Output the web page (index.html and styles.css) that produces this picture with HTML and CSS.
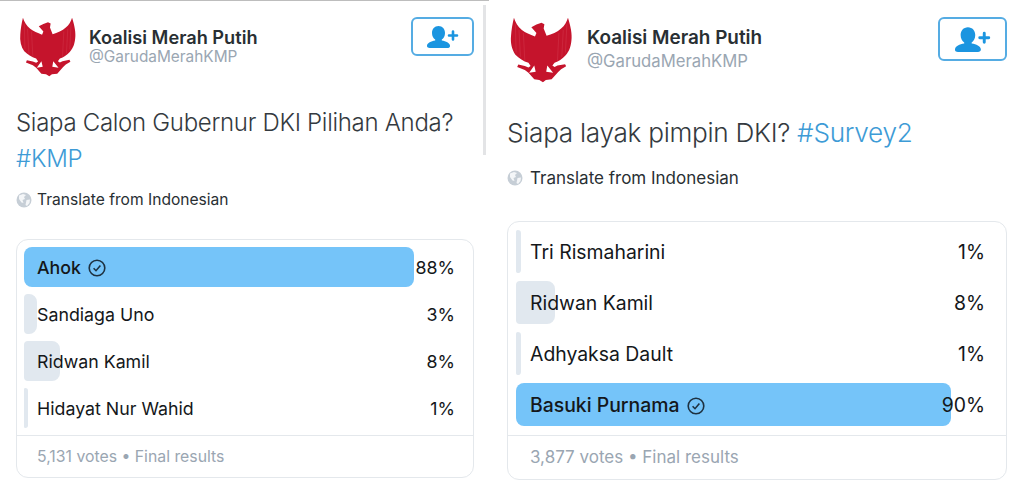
FILE: index.html
```html
<!DOCTYPE html>
<html lang="id">
<head>
<meta charset="utf-8">
<title>Koalisi Merah Putih polls</title>
<link rel="stylesheet" href="styles.css">
</head>
<body>
<svg class="defs" width="0" height="0" aria-hidden="true">
  <defs>
    <symbol id="garuda" viewBox="56 52 172 182">
      <path d="M66 54 C70 66 76 78 88 88 C98 96 110 100 124 106 L128 96 L114 80 L128 73 L142 68 L150 72 L148 84 L156 104 C170 100 186 94 196 84 C206 76 212 64 215 54 C220 70 226 92 225 110 C224 130 220 146 208 158 C198 168 190 174 178 178 L172 186 L178 190 L186 186 L207 182 L210 188 L196 196 L188 204 L170 224 L154 226 L146 232 L136 226 L122 224 L106 206 L96 198 L75 190 L78 183 L96 187 L106 191 L112 187 L106 178 C92 174 80 166 70 156 C60 142 56 124 58 104 C59 88 62 70 66 54 Z" fill="#c5142c"/>
      <path d="M122 186 L108 206 L126 203 Z M158 186 L174 206 L155 203 Z" fill="#fff"/>
      <path d="M70 72 L72 150 M80 88 L84 162 M92 96 L96 172 M212 72 L208 150 M202 88 L198 162 M190 96 L186 172" stroke="#d8475a" stroke-width="1" fill="none"/>
    </symbol>
    <symbol id="follow" viewBox="0 0 32 24">
      <path d="M11.5 1 C15.5 1 18 4.2 18 8 C18 11 16.6 13.4 14.8 14.6 L14.8 15.6 C19 16.4 22.6 17.8 23 20.6 C23.2 22.4 22 23 20.4 23 L2.6 23 C1 23 -.2 22.4 0 20.6 C.4 17.8 4 16.4 8.2 15.6 L8.2 14.6 C6.4 13.4 5 11 5 8 C5 4.2 7.5 1 11.5 1 Z" fill="#1b95e0"/>
      <path d="M26 6.5 V14.5 M22 10.5 H30" stroke="#1b95e0" stroke-width="2.6" stroke-linecap="round" fill="none"/>
    </symbol>
    <symbol id="globe" viewBox="0 0 16 16">
      <circle cx="8" cy="8" r="7.5" fill="#c6ced6"/>
      <path d="M3 3.5 L7 2 L10 3 L8 5 L9 7 L6.5 8 L7.5 11 L5.5 10.5 L3 7 Z M10.5 8 L14 7.5 L13.5 11 L11 14 L9.5 13 Z" fill="#f4f6f8"/>
    </symbol>
    <symbol id="chosen" viewBox="0 0 18 18">
      <circle cx="9" cy="9" r="7.8" fill="none" stroke="#1e3140" stroke-width="1.6"/>
      <path d="M5.6 9.3 L8 11.7 L12.4 6.6" fill="none" stroke="#1e3140" stroke-width="1.6"/>
    </symbol>
  </defs>
</svg>

<main class="page">
  <section class="tweet tweet-a">
    <header class="head">
      <svg class="avatar"><use href="#garuda"/></svg>
      <div class="who">
        <div class="name">Koalisi Merah Putih</div>
        <div class="handle">@GarudaMerahKMP</div>
      </div>
      <button class="follow" type="button" aria-label="Follow"><svg class="follow-icon"><use href="#follow"/></svg></button>
    </header>
    <p class="title">Siapa Calon Gubernur DKI Pilihan Anda? <a class="tag">#KMP</a></p>
    <div class="translate"><svg class="globe"><use href="#globe"/></svg>Translate from Indonesian</div>
    <div class="poll">
      <ul class="options">
        <li class="option winner"><span class="bar" style="width:390px"></span><span class="label">Ahok <svg class="chosen"><use href="#chosen"/></svg></span><span class="pct">88%</span></li>
        <li class="option"><span class="bar" style="width:13px"></span><span class="label">Sandiaga Uno</span><span class="pct">3%</span></li>
        <li class="option"><span class="bar" style="width:36px"></span><span class="label">Ridwan Kamil</span><span class="pct">8%</span></li>
        <li class="option"><span class="bar" style="width:4px"></span><span class="label">Hidayat Nur Wahid</span><span class="pct">1%</span></li>
      </ul>
      <div class="meta">5,131 votes • Final results</div>
    </div>
  </section>
  <div class="divider"></div>
  <section class="tweet tweet-b">
    <header class="head">
      <svg class="avatar"><use href="#garuda"/></svg>
      <div class="who">
        <div class="name">Koalisi Merah Putih</div>
        <div class="handle">@GarudaMerahKMP</div>
      </div>
      <button class="follow" type="button" aria-label="Follow"><svg class="follow-icon"><use href="#follow"/></svg></button>
    </header>
    <p class="title">Siapa layak pimpin DKI? <a class="tag">#Survey2</a></p>
    <div class="translate"><svg class="globe"><use href="#globe"/></svg>Translate from Indonesian</div>
    <div class="poll">
      <ul class="options">
        <li class="option"><span class="bar" style="width:5px"></span><span class="label">Tri Rismaharini</span><span class="pct">1%</span></li>
        <li class="option"><span class="bar" style="width:39px"></span><span class="label">Ridwan Kamil</span><span class="pct">8%</span></li>
        <li class="option"><span class="bar" style="width:5px"></span><span class="label">Adhyaksa Dault</span><span class="pct">1%</span></li>
        <li class="option winner"><span class="bar" style="width:435px"></span><span class="label">Basuki Purnama <svg class="chosen"><use href="#chosen"/></svg></span><span class="pct">90%</span></li>
      </ul>
      <div class="meta">3,877 votes • Final results</div>
    </div>
  </section>
</main>
</body>
</html>
```
FILE: styles.css
```css
* { box-sizing: border-box; }
html, body { margin: 0; padding: 0; background: #fff; }
body { font-family: Inter, "Liberation Sans", sans-serif; color: #14171a; overflow: hidden; }
.defs { position: absolute; }
ul { list-style: none; margin: 0; padding: 0; }

.page { display: flex; width: 1024px; height: 490px; background: linear-gradient(#bdbdbd, #bdbdbd) 0 0 / 489px 1px no-repeat; }
.tweet { display: flex; flex-direction: column; flex: none; }

.head { display: flex; align-items: flex-start; }
.who { flex: 1; }
.name { font-weight: 600; color: #292f33; white-space: nowrap; }
.handle { color: #9aa6b2; white-space: nowrap; }
.follow { display: flex; align-items: center; justify-content: center; padding: 0; background: #fff; border: 2px solid #55ace3; border-radius: 6px; }
.follow-icon { display: block; }

.title { margin: 0; font-weight: 300; color: #343a40; letter-spacing: -0.3px; }
.tag { color: #3d9bd6; }
.translate { display: flex; align-items: center; color: #292f33; white-space: nowrap; }
.globe { flex: none; width: 16px; height: 16px; }
.chosen { width: 18px; height: 18px; margin-left: 2px; vertical-align: -3px; }

.poll { border: 1px solid #e4e8ec; border-radius: 12px; display: flex; flex-direction: column; }
.options { display: flex; flex-direction: column; }
.option { position: relative; display: flex; align-items: center; justify-content: space-between; }
.bar { position: absolute; left: 0; top: 0; bottom: 0; background: #e1e8ef; border-radius: 4px 8px 8px 4px; }
.winner .bar { background: #75c4f9; border-radius: 8px; }
.label, .pct { position: relative; color: #14171a; white-space: nowrap; }
.winner .label { font-weight: 500; }
.meta { border-top: 1px solid #e4e8ec; color: #9aa6b2; white-space: nowrap; }

.divider { flex: none; width: 3px; height: 150px; margin: 5px 0 0 0; background: #e3e4e6; }

/* left screenshot */
.tweet-a { width: 483px; padding: 17px 9px 0 16px; }
.tweet-a .avatar { width: 58px; height: 60px; margin: 0 12px 0 3px; }
.tweet-a .who { padding-top: 10px; }
.tweet-a .name { font-size: 18.2px; line-height: 20px; }
.tweet-a .handle { font-size: 15.4px; line-height: 20px; }
.tweet-a .follow { width: 63px; height: 39px; }
.tweet-a .follow-icon { width: 32px; height: 24px; }
.tweet-a .title { margin-top: 28px; font-size: 24px; line-height: 36px; }
.tweet-a .translate { margin-top: 13px; font-size: 15.6px; line-height: 20px; gap: 5px; }
.tweet-a .poll { margin-top: 29px; height: 239px; }
.tweet-a .options { padding: 7px 7px 0 7px; gap: 7px; height: 195px; }
.tweet-a .option { height: 40px; padding: 0 11px 0 13px; font-size: 17.8px; }
.tweet-a .meta { padding: 11px 12px 0 20px; font-size: 15.8px; line-height: 20px; }

/* right screenshot */
.tweet-b { width: 538px; padding: 17px 17px 0 21px; }
.tweet-b .avatar { width: 63px; height: 66px; margin: 0 14px 0 3px; }
.tweet-b .who { padding-top: 10px; }
.tweet-b .name { font-size: 18.9px; line-height: 22px; }
.tweet-b .handle { font-size: 16.7px; line-height: 24px; }
.tweet-b .follow { width: 69px; height: 44px; }
.tweet-b .follow-icon { width: 36px; height: 27px; }
.tweet-b .title { margin-top: 30px; font-size: 26.2px; line-height: 40px; }
.tweet-b .translate { margin-top: 14px; font-size: 17px; line-height: 22px; gap: 7px; }
.tweet-b .poll { margin-top: 32px; height: 259px; }
.tweet-b .options { padding: 8px 8px 0 8px; gap: 8px; height: 213px; }
.tweet-b .option { height: 43px; padding: 0 13px 0 14px; font-size: 19.4px; }
.tweet-b .meta { padding: 10px 12px 0 22px; font-size: 17px; line-height: 22px; }
```
